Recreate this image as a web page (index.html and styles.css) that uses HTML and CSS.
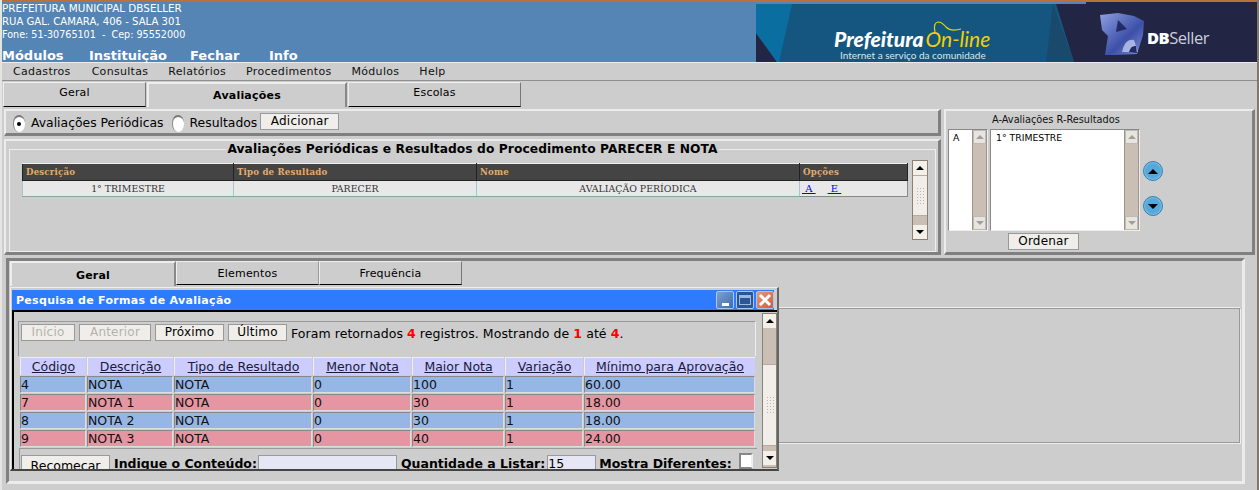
FILE: index.html
```html
<!DOCTYPE html>
<html lang="pt">
<head>
    <meta charset="UTF-8">
    <title>Prefeitura On-line</title>
    <link rel="stylesheet" href="styles.css">
</head>
<body>

    <!-- Topo -->
    <header class="topo">
        <div class="topo-info">
            <div class="endereco">
                <div class="linha1">PREFEITURA MUNICIPAL DBSELLER</div>
                <div class="linha2">RUA GAL. CAMARA, 406 - SALA 301</div>
                <div class="linha3">Fone: 51-30765101 &nbsp;-&nbsp; Cep: 95552000</div>
            </div>
            <nav class="menu-topo">
                <span>Módulos</span>
                <span>Instituição</span>
                <span>Fechar</span>
                <span>Info</span>
            </nav>
        </div>
        <div class="banner">
            <svg class="banner-fundo" width="503" height="60" viewBox="0 0 503 60">
                <rect width="503" height="60" fill="#232544"/>
                <polygon points="0,2 300,2 318,60 21,60 0,31" fill="#14567f"/>
                <polygon points="0,2 36,2 23,60 21,60 0,31" fill="#0a6fa0"/>
                <polygon points="297,2 318,60 290,60" fill="#1a4a6b"/>
                <rect width="330" height="2" fill="#5585b5"/>
                <defs>
                    <linearGradient id="gradLogo" x1="0" y1="0" x2="1" y2="1">
                        <stop offset="0" stop-color="#8f9fe0"/>
                        <stop offset="0.6" stop-color="#3c50a8"/>
                        <stop offset="1" stop-color="#7f93d8"/>
                    </linearGradient>
                </defs>
                <path d="M179 30 Q177 21 182 20 Q186 20 190 25 Q195 30 205 27" fill="none" stroke="#f2d000" stroke-width="1.2"/>
                <path d="M344 13 L362 11 L378 14 L388 19 L387 33 L381 52 L358 53 L349 53 L352 34 L346 28 Z" fill="url(#gradLogo)"/>
                <path d="M362 18 L371 27 L360 30 Z" fill="#232a66"/>
                <path d="M366 50 Q369 36 378 38 L382 50 Z" fill="#cdd5f2" opacity="0.7"/>
                <path d="M373 50 Q375 43 380 44 L381 51 Z" fill="#232a66"/>
            </svg>
            <div class="logo-prefeitura">
                <div class="logo-nome"><span class="logo-branco">Prefeitura</span><span class="logo-amarelo">On-line</span></div>
                <div class="logo-sub">Internet a serviço da comunidade</div>
            </div>
            <div class="logo-dbseller"><b>DB</b>Seller</div>
        </div>
    </header>

    <!-- Menu -->
    <nav class="menu">
        <span>Cadastros</span>
        <span>Consultas</span>
        <span>Relatórios</span>
        <span>Procedimentos</span>
        <span>Módulos</span>
        <span>Help</span>
    </nav>

    <!-- Abas principais -->
    <div class="abas abas-topo">
        <div class="aba aba-geral">Geral</div>
        <div class="aba aba-ativa aba-aval">Avaliações</div>
        <div class="aba aba-escolas">Escolas</div>
    </div>

    <div class="colunas">
        <div class="coluna-esq">
            <div class="painel painel-form">
                <span class="radio radio-marcado"></span>
                <label class="lbl-aval">Avaliações Periódicas</label>
                <span class="radio"></span>
                <label class="lbl-res">Resultados</label>
                <button class="btn btn-adicionar">Adicionar</button>
            </div>

            <div class="painel painel-lista">
                <fieldset class="grupo">
                    <legend>Avaliações Periódicas e Resultados do Procedimento PARECER E NOTA</legend>
                    <div class="grupo-corpo">
                        <table class="tabela-proc">
                            <colgroup>
                                <col class="c-desc"><col class="c-tipo"><col class="c-nome"><col class="c-opc">
                            </colgroup>
                            <tr>
                                <th>Descrição</th>
                                <th>Tipo de Resultado</th>
                                <th>Nome</th>
                                <th>Opções</th>
                            </tr>
                            <tr>
                                <td>1° TRIMESTRE</td>
                                <td>PARECER</td>
                                <td>AVALIAÇÃO PERÍODICA</td>
                                <td class="opcoes"><a>&nbsp;A&nbsp;</a><a>&nbsp;E&nbsp;</a></td>
                            </tr>
                        </table>
                        <div class="scroll scroll-proc">
                            <div class="seta"><i class="tri-cima"></i></div>
                            <div class="polegar"><span class="grip"></span></div>
                            <div class="trilho"></div>
                            <div class="seta"><i class="tri-baixo"></i></div>
                        </div>
                    </div>
                </fieldset>
            </div>
        </div>

        <div class="painel painel-ordem">
            <div class="ordem-titulo">A-Avaliações R-Resultados</div>
            <div class="ordem-corpo">
                <div class="listas">
                    <div class="listbox lb-tipo">
                        <div class="lb-texto">A</div>
                        <div class="scroll scroll-lista">
                            <div class="seta seta-off"><i class="tri-cima"></i></div>
                            <div class="trilho"></div>
                            <div class="seta seta-off"><i class="tri-baixo"></i></div>
                        </div>
                    </div>
                    <div class="listbox lb-nome">
                        <div class="lb-texto">1° TRIMESTRE</div>
                        <div class="scroll scroll-lista">
                            <div class="seta seta-off"><i class="tri-cima"></i></div>
                            <div class="trilho"></div>
                            <div class="seta seta-off"><i class="tri-baixo"></i></div>
                        </div>
                    </div>
                </div>
                <div class="setas-ordem">
                    <span class="bola"><i class="tri-cima"></i></span>
                    <span class="bola"><i class="tri-baixo"></i></span>
                </div>
            </div>
            <button class="btn btn-ordenar">Ordenar</button>
        </div>
    </div>

    <!-- Painel de baixo -->
    <div class="painel painel-baixo">
        <div class="abas abas-baixo">
            <div class="aba aba-ativa aba-b1">Geral</div>
            <div class="aba aba-b2">Elementos</div>
            <div class="aba aba-b3">Frequência</div>
        </div>
        <div class="area-vazia"></div>
    </div>

    <!-- Janela de pesquisa -->
    <div class="janela">
        <div class="janela-titulo">
            <span class="janela-nome">Pesquisa de Formas de Avaliação</span>
            <span class="jbtn jbtn-min"><i></i></span>
            <span class="jbtn jbtn-max"><i></i></span>
            <span class="jbtn jbtn-fechar">
                <svg width="14" height="14" viewBox="0 0 14 14"><path d="M2 2 L12 12 M12 2 L2 12" stroke="#fff" stroke-width="3"/></svg>
            </span>
        </div>
        <div class="janela-corpo">
            <div class="janela-conteudo">
                <div class="navegacao">
                    <button class="btn btn-off b-inicio">Início</button>
                    <button class="btn btn-off b-anterior">Anterior</button>
                    <button class="btn b-proximo">Próximo</button>
                    <button class="btn b-ultimo">Último</button>
                    <span class="nav-texto">Foram retornados <b>4</b> registros. Mostrando de <b>1</b> até <b>4</b>.</span>
                </div>
                <table class="tabela-pesq">
                    <colgroup>
                        <col class="p1"><col class="p2"><col class="p3"><col class="p4"><col class="p5"><col class="p6"><col class="p7">
                    </colgroup>
                    <tr>
                        <th><u>Código</u></th>
                        <th><u>Descrição</u></th>
                        <th><u>Tipo de Resultado</u></th>
                        <th><u>Menor Nota</u></th>
                        <th><u>Maior Nota</u></th>
                        <th><u>Variação</u></th>
                        <th><u>Mínimo para Aprovação</u></th>
                    </tr>
                    <tr class="azul"><td>4</td><td>NOTA</td><td>NOTA</td><td>0</td><td>100</td><td>1</td><td>60.00</td></tr>
                    <tr class="rosa"><td>7</td><td>NOTA 1</td><td>NOTA</td><td>0</td><td>30</td><td>1</td><td>18.00</td></tr>
                    <tr class="azul"><td>8</td><td>NOTA 2</td><td>NOTA</td><td>0</td><td>30</td><td>1</td><td>18.00</td></tr>
                    <tr class="rosa"><td>9</td><td>NOTA 3</td><td>NOTA</td><td>0</td><td>40</td><td>1</td><td>24.00</td></tr>
                </table>
                <div class="filtro">
                    <button class="btn b-recomecar">Recomecar</button>
                    <strong>Indique o Conteúdo:</strong>
                    <span class="campo campo-conteudo"></span>
                    <strong>Quantidade a Listar:</strong>
                    <span class="campo campo-qtd">15</span>
                    <strong class="lbl-dif">Mostra Diferentes:</strong>
                    <span class="check"></span>
                </div>
            </div>
            <div class="scroll scroll-janela">
                <div class="seta"><i class="tri-cima"></i></div>
                <div class="trilho t1"></div>
                <div class="polegar"><span class="grip"></span></div>
                <div class="trilho t2"></div>
                <div class="seta"><i class="tri-baixo"></i></div>
            </div>
        </div>
    </div>

</body>
</html>
```

FILE: styles.css
```css
* {
    box-sizing: border-box;
}

html, body {
    margin: 0;
    padding: 0;
}

body {
    width: 1259px;
    height: 490px;
    overflow: hidden;
    position: relative;
    background-color: #cdcdcd;
    font-family: "DejaVu Sans", sans-serif;
    font-size: 11px;
    color: #000;
    border-left: 2px solid #e4e4e0;
    border-right: 2px solid #807870;
}

/* Topo */
.topo {
    margin-left: -2px;
    width: 1259px;
    height: 62px;
    display: flex;
    justify-content: space-between;
    background-color: #5585b5;
    border-top: 2px solid #b8733a;
}

.topo-info {
    color: #fff;
    padding-left: 2px;
}

.endereco {
    line-height: 13px;
    height: 46px;
    white-space: nowrap;
}

.linha1 { font-size: 10.4px; }
.linha2 { font-size: 10.1px; }
.linha3 { font-size: 9.6px; }

.menu-topo {
    display: flex;
    font-size: 13px;
    font-weight: bold;
    line-height: 16px;
}

.menu-topo span:nth-child(1) { width: 87px; }
.menu-topo span:nth-child(2) { width: 101px; }
.menu-topo span:nth-child(3) { width: 79px; }

.banner {
    position: relative;
    width: 503px;
    height: 60px;
}

.banner-fundo {
    position: absolute;
    left: 0;
    top: 0;
}

.logo-prefeitura {
    position: absolute;
    left: 78px;
    top: 26px;
    width: 160px;
    font-family: Lato, sans-serif;
    color: #fff;
}

.logo-nome {
    font-size: 21px;
    line-height: 22px;
    font-style: italic;
    white-space: nowrap;
}

.logo-branco {
    font-weight: 900;
}

.logo-amarelo {
    color: #f2d000;
    font-weight: 400;
    margin-left: 2px;
}

.logo-sub {
    font-size: 10px;
    line-height: 10px;
    margin-left: 6px;
    white-space: nowrap;
    color: #dbe6ee;
}

.logo-dbseller {
    position: absolute;
    left: 391px;
    top: 26px;
    font-family: "Open Sans", sans-serif;
    font-size: 16.5px;
    line-height: 20px;
    letter-spacing: -0.5px;
    color: #c9cede;
}

.logo-dbseller b {
    color: #fff;
    font-weight: 800;
}

/* Menu */
.menu {
    height: 19px;
    padding: 0 0 1px 11px;
    display: flex;
    gap: 20px;
    align-items: center;
    font-size: 11px;
    letter-spacing: 0.3px;
    border-top: 1px solid #ececec;
    border-bottom: 1px solid #8f8f8f;
    color: #111;
}

.menu span:first-child {
    margin-right: 1px;
}

/* Abas */
.abas {
    display: flex;
}

.abas-topo {
    height: 25px;
    margin: 1px 0 0 1px;
    gap: 1px;
}

.aba {
    text-align: center;
    background-color: #cdcdcd;
    border-top: 1px solid #eee;
    border-left: 1px solid #eee;
    border-right: 1px solid #777;
    border-bottom: 1px solid #000;
    font-size: 11px;
    letter-spacing: 0.2px;
    line-height: 20px;
}

.aba-ativa {
    border: 0;
    border-left: 2px solid #eee;
    border-top: 2px solid #eee;
    border-right: 2px solid #888;
    font-weight: bold;
    line-height: 23px;
}

.aba-geral { width: 143px; }
.aba-aval { width: 200px; }
.aba-escolas { width: 173px; }

/* Paineis */
.painel {
    background-color: #cdcdcd;
    border-top: 2px solid #ececec;
    border-left: 2px solid #ececec;
    border-right: 3px solid #808080;
    border-bottom: 3px solid #808080;
}

.colunas {
    display: flex;
    margin: 2px 0 0 2px;
    gap: 3px;
}

.coluna-esq {
    width: 937px;
    display: flex;
    flex-direction: column;
    gap: 3px;
}

.painel-form {
    height: 27px;
    display: flex;
    align-items: flex-start;
    padding: 2px 0 0 7px;
    font-size: 12.4px;
}

.radio {
    display: block;
    flex: none;
    width: 12px;
    height: 17px;
    margin-top: 2px;
    background-color: #fff;
    border-radius: 6px / 8px;
    border-top: 2px solid #777;
    border-left: 1px solid #888;
}

.radio-marcado {
    position: relative;
}

.radio-marcado::after {
    content: "";
    position: absolute;
    left: 3px;
    top: 5px;
    width: 4px;
    height: 4px;
    border-radius: 50%;
    background-color: #000;
}

.lbl-aval {
    margin: 2px 8px 0 6px;
    line-height: 15px;
}

.lbl-res {
    margin: 2px 3px 0 6px;
    line-height: 15px;
}

.btn {
    font-family: "DejaVu Sans", sans-serif;
    font-size: 12px;
    padding: 0;
    color: #000;
    background-color: #f0eeea;
    border: 1px solid #999;
    border-radius: 0;
    text-align: center;
}

.btn-adicionar {
    flex: none;
    width: 79px;
    height: 17px;
    letter-spacing: 0.2px;
    line-height: 15px;
}

.painel-lista {
    height: 116px;
    padding: 1px 2px 0 3px;
}

.grupo {
    margin: 0;
    padding: 0;
    height: 110px;
    border: 1px solid #eee;
    min-width: 0;
}

.grupo legend {
    margin: 0 auto;
    padding: 0 1px;
    font-size: 12.25px;
    font-weight: bold;
    line-height: 15px;
    letter-spacing: 0.08px;
    color: #000;
}

.grupo-corpo {
    display: flex;
    align-items: flex-start;
    padding: 3px 0 0 12px;
}

.tabela-proc {
    width: 885px;
    margin-top: 3px;
    table-layout: fixed;
    border-collapse: collapse;
    font-family: "DejaVu Serif", serif;
    font-size: 9.4px;
}

.c-desc { width: 211px; }
.c-tipo { width: 243px; }
.c-nome { width: 323px; }
.c-opc { width: 108px; }

.tabela-proc th {
    height: 17px;
    padding: 0 0 0 3px;
    text-align: left;
    font-size: 8.6px;
    font-weight: bold;
    letter-spacing: 0.2px;
    color: #e2ac70;
    background-color: #444;
    border: 1px solid #222;
    border-top-color: #eee;
}

.tabela-proc td {
    height: 16px;
    padding: 0;
    text-align: center;
    color: #333;
    background-color: #e8e8e8;
    border: 1px solid #a6c8cc;
    border-bottom-color: #8aa5a8;
}

.tabela-proc td.opcoes {
    text-align: left;
    padding-left: 2px;
    font-size: 10px;
    border-color: #888;
    border-top-width: 1px;
}

.opcoes a {
    margin-right: 12px;
    color: #00e;
    text-decoration: underline;
}

/* Barras de rolagem */
.scroll {
    display: flex;
    flex-direction: column;
    flex: none;
    background-color: #c9bfb4;
}

.seta {
    height: 14px;
    flex: none;
    display: flex;
    align-items: center;
    justify-content: center;
    background-color: #f3f0ea;
}

.seta-off {
    background-color: #e8e4de;
    border: 1px solid #bbb;
}

.seta-off i {
    opacity: 0.3;
}

.tri-cima, .tri-baixo {
    display: block;
    width: 0;
    height: 0;
    border-left: 4px solid transparent;
    border-right: 4px solid transparent;
}

.tri-cima {
    border-bottom: 4px solid #000;
}

.tri-baixo {
    border-top: 4px solid #000;
}

.trilho {
    flex: 1;
    background-color: #c9bfb4;
}

.polegar {
    display: flex;
    align-items: center;
    justify-content: center;
    background-color: #f1eee9;
    border-top: 1px solid #b5ab9f;
    border-bottom: 1px solid #b5ab9f;
}

.grip {
    display: block;
    width: 8px;
    height: 18px;
    background-image: radial-gradient(#bdb5aa 1px, transparent 1px);
    background-size: 3px 3px;
}

.scroll-proc {
    width: 16px;
    height: 80px;
    margin: 0 0 0 4px;
    border: 1px solid #8a8074;
}

.scroll-proc .polegar {
    height: 41px;
}

/* Painel de ordenar */
.painel-ordem {
    width: 311px;
    height: 146px;
    padding-left: 2px;
    position: relative;
}

.ordem-titulo {
    margin: 3px 0 0 44px;
    line-height: 11px;
    font-size: 9.75px;
    color: #111;
}

.ordem-corpo {
    display: flex;
    margin-top: 4px;
}

.listas {
    display: flex;
    gap: 2px;
}

.listbox {
    height: 102px;
    display: flex;
    justify-content: space-between;
    background-color: #fff;
    border: 1px solid #888;
    border-right-color: #eee;
    border-bottom-color: #eee;
}

.lb-tipo { width: 40px; }
.lb-nome { width: 150px; }

.lb-texto {
    font-size: 9.3px;
    line-height: 11px;
    padding: 2px 0 0 4px;
}

.lb-nome .lb-texto {
    padding-left: 5px;
}

.scroll-lista {
    width: 15px;
    border-left: 1px solid #a09688;
    border-right: 1px solid #a09688;
}

.setas-ordem {
    display: flex;
    flex-direction: column;
    gap: 15px;
    margin: 32px 0 0 3px;
}

.bola {
    display: flex;
    align-items: center;
    justify-content: center;
    width: 20px;
    height: 20px;
    border-radius: 50%;
    background-color: #55a8dc;
    border: 1px solid #3b82ae;
    box-shadow: inset 0 0 2px #bfe3f7;
}

.bola i {
    border-left-width: 5px;
    border-right-width: 5px;
    border-bottom-width: 5px;
    border-top-width: 5px;
}

.bola .tri-cima { border-top: 0; }
.bola .tri-baixo { border-bottom: 0; }

.btn-ordenar {
    display: block;
    width: 71px;
    height: 17px;
    margin: 2px 0 0 60px;
    line-height: 15px;
    letter-spacing: 0.2px;
}

/* Painel de baixo */
.painel-baixo {
    width: 1239px;
    height: 226px;
    margin: 3px 0 0 4px;
    border-left: 3px solid #808080;
    border-top: 3px solid #808080;
    border-right: 3px solid #ececec;
    border-bottom: 3px solid #ececec;
    padding: 0 0 0 1px;
    position: relative;
}

.abas-baixo {
    height: 25px;
    gap: 0;
}

.abas-baixo .aba-b1 {
    line-height: 25px;
}

.aba-b1 { width: 166px; }
.aba-b2 { width: 143px; border-right: 1px solid #999; margin-bottom: 1px; line-height: 23px; }
.aba-b3 { width: 143px; margin-bottom: 1px; line-height: 23px; }

.area-vazia {
    position: absolute;
    left: 2px;
    top: 47px;
    right: 2px;
    height: 135px;
    border: 1px solid #999;
    box-shadow: 1px 1px 0 #eee, 0 -1px 0 #eee;
}

/* Janela */
.janela {
    position: absolute;
    left: 8px;
    top: 287px;
    width: 769px;
    height: 184px;
    padding: 2px 3px 0 1px;
    background-color: #cdcdcd;
    border-top: 1px solid #eee;
    border-left: 1px solid #eee;
    border-right: 2px solid #666;
    border-bottom: 2px solid #444;
    overflow: hidden;
}

.janela-titulo {
    display: flex;
    align-items: center;
    height: 20px;
    padding: 0 0 0 4px;
    gap: 2px;
    background-color: #2e7bff;
    color: #fff;
}

.janela-nome {
    flex: 1;
    font-size: 11px;
    font-weight: bold;
    letter-spacing: 0.3px;
}

.jbtn {
    display: flex;
    align-items: center;
    justify-content: center;
    width: 18px;
    height: 18px;
    border: 1px solid #a8c8f0;
    border-radius: 2px;
    background-color: #4f7fc0;
}

.jbtn-min {
    background: linear-gradient(135deg, #7fa0d0, #3f6cae);
}

.jbtn-min i {
    display: block;
    width: 7px;
    height: 3px;
    margin-top: 9px;
    background-color: #fff;
}

.jbtn-max {
    background-color: #2c5596;
}

.jbtn-max i {
    display: block;
    width: 12px;
    height: 10px;
    border: 1px solid #9db8e0;
    border-top-width: 3px;
}

.jbtn-fechar {
    background: linear-gradient(135deg, #e69a7c, #cc5c3c);
}

.janela-corpo {
    display: flex;
    height: 160px;
    width: 765px;
    border-top: 2px solid #000;
    border-left: 2px solid #000;
    padding-top: 1px;
}

.janela-conteudo {
    flex: none;
    width: 748px;
    padding: 8px 0 0 4px;
}

.navegacao {
    width: 738px;
    height: 35px;
    padding: 2px 0 0 2px;
    display: flex;
    align-items: flex-start;
    font-size: 12.5px;
    border-top: 1px solid #999;
    border-left: 1px solid #999;
    border-right: 1px solid #eee;
}

.navegacao .btn {
    flex: none;
    height: 17px;
    line-height: 15px;
    letter-spacing: 0.2px;
}

.btn-off {
    color: #b4b2ae;
}

.b-inicio { width: 54px; margin-right: 4px; }
.b-anterior { width: 72px; margin-right: 4px; }
.b-proximo { width: 69px; margin-right: 4px; }
.b-ultimo { width: 59px; margin-right: 4px; }

.nav-texto {
    line-height: 20px;
    letter-spacing: 0.06px;
    white-space: nowrap;
}

.nav-texto b {
    color: #f00;
}

.tabela-pesq {
    width: 737px;
    margin-left: 1px;
    table-layout: fixed;
    border-collapse: separate;
    border-spacing: 1px;
    font-size: 12.5px;
}

.p1 { width: 66px; }
.p2 { width: 86px; }
.p3 { width: 138px; }
.p4 { width: 98px; }
.p5 { width: 92px; }
.p6 { width: 78px; }
.p7 { width: 171px; }

.tabela-pesq th {
    height: 18px;
    padding: 0;
    font-weight: normal;
    text-align: center;
    background-color: #ccccff;
    border-left: 1px solid #eee;
    border-top: 1px solid #eee;
    color: #1a1a3a;
}

.tabela-pesq td {
    height: 17px;
    padding: 0;
    line-height: 14px;
    border: 1px solid #888;
    border-right-color: #ddd;
    border-bottom-color: #ddd;
    color: #111;
}

.azul td { background-color: #96b6e6; }
.rosa td { background-color: #e696a2; }

.filtro {
    display: flex;
    align-items: flex-start;
    height: 24px;
    margin-left: 1px;
    padding: 6px 0 0 1px;
    font-size: 12.5px;
    width: 738px;
    border-top: 1px solid #999;
    border-left: 1px solid #999;
}

.b-recomecar {
    flex: none;
    width: 89px;
    height: 20px;
    margin-right: 4px;
    font-size: 12.5px;
}

.filtro strong {
    white-space: nowrap;
    margin-top: 1px;
}

.campo {
    flex: none;
    display: block;
    height: 18px;
    background-color: #e6e6f4;
    border: 1px solid #999;
    line-height: 16px;
}

.campo-conteudo {
    width: 139px;
    margin: 0 4px 0 1px;
}

.campo-qtd {
    width: 49px;
    margin-left: 2px;
}

.lbl-dif {
    margin-left: 3px;
}

.check {
    flex: none;
    display: block;
    width: 14px;
    height: 16px;
    margin-left: 7px;
    margin-top: -2px;
    background-color: #fff;
    border: 2px solid #888;
    border-right-color: #eee;
}

.scroll-janela {
    width: 15px;
    height: 155px;
    border: 1px solid #8a8074;
}

.scroll-janela .t1 {
    flex: none;
    height: 36px;
}

.scroll-janela .polegar {
    height: 82px;
}

.scroll-janela .t2 {
    flex: none;
    height: 5px;
}
```
